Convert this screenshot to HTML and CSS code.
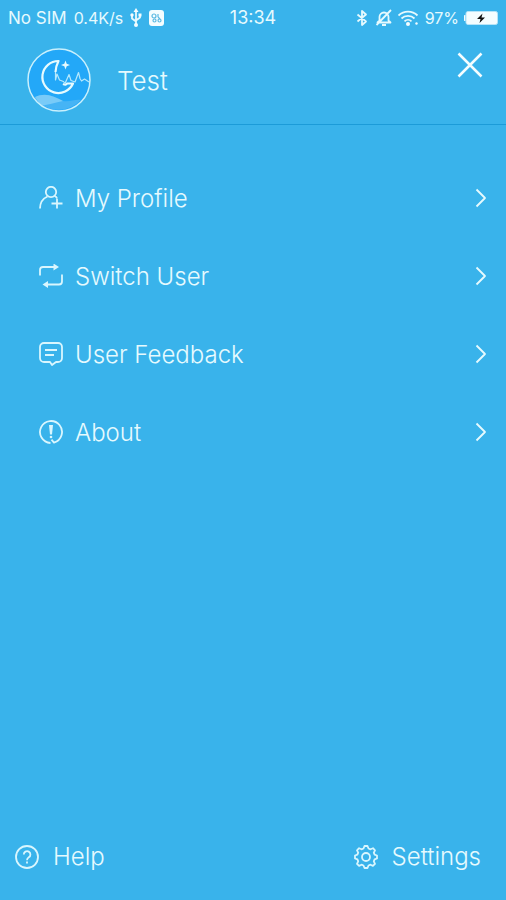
FILE: index.html
```html
<!DOCTYPE html>
<html lang="en">
    <head>
        <meta charset="UTF-8" />
        <meta name="viewport" content="width=device-width, initial-scale=1" />
        <title>Menu</title>
        <link rel="stylesheet" href="styles.css">
    </head>

    <body>
        <div class="status-bar">
            <div class="status-left">
                <span>No SIM</span>
                <span class="speed">0.4K/s</span>
                <svg width="12" height="20" viewBox="0 0 12 20">
                    <path class="line" d="M6 3v14M2 7v3.500l4 3M10 7v2.500l-4 3" />
                    <path class="solid" d="M6 0l2.500 4h-5zM8.500 5.500h3v3h-3z" />
                    <circle class="solid" cx="2" cy="7" r="1.700" />
                    <circle class="solid" cx="6" cy="17" r="2" />
                </svg>
                <svg class="app-icon" width="15" height="16" viewBox="0 0 15 16">
                    <rect class="solid" width="15" height="16" rx="3" />
                    <g class="app-mark">
                        <circle cx="5" cy="6" r="2" />
                        <circle cx="5.500" cy="10.500" r="1.500" />
                        <circle cx="10.500" cy="10.500" r="1.500" />
                        <path d="M9 4v3M9 7l2 2" />
                    </g>
                </svg>
            </div>
            <span class="clock">13:34</span>
            <div class="status-right">
                <svg width="12" height="18" viewBox="0 0 12 18">
                    <path class="line" d="M1.500 5.500l8.500 7-4 3.500V2l4 3.500-8.500 7" />
                </svg>
                <svg class="bell" width="18" height="18" viewBox="0 0 18 18">
                    <path class="line" d="M2.500 13.500l2-2V8a4.500 4.500 0 0 1 9 0v3.500l2 2zM7 16h4M16 1L1.500 16" />
                </svg>
                <svg class="wifi" width="22" height="18" viewBox="0 0 22 18">
                    <path class="line" d="M.5 6.500a13.500 13.500 0 0 1 19 0M3.500 9.500a9.200 9.200 0 0 1 13 0M6.500 12.300a5 5 0 0 1 7 0" />
                    <circle class="solid" cx="10" cy="15" r="2" />
                    <circle class="solid" cx="18.500" cy="14.500" r="1.200" />
                </svg>
                <span class="percent">97%</span>
                <svg width="34" height="14" viewBox="2 0 34 14">
                    <path class="solid" d="M3.500 4v6A3 3 0 0 1 3.500 4z" />
                    <rect class="battery" x="4" y=".5" width="31.500" height="13" rx="2" />
                    <path class="bolt" d="M20.500 2.500L15 8h3.500l-1 4 5.500-5.500h-3.500z" />
                </svg>
            </div>
        </div>

        <header class="header">
            <svg class="avatar" width="64" height="64" viewBox="0 0 64 64">
                <circle class="avatar-sky" cx="32" cy="32" r="31" />
                <path class="avatar-cloud" d="M7 50C15 44 28 48 36 53c7 1 12-2 18-1A31 31 0 0 1 9 52z" />
                <path class="avatar-haze" d="M8 49c10-5 19-1 28 4-9 2-17 4-22 5z" />
                <circle class="avatar-ring" cx="32" cy="32" r="31" />
                <path class="avatar-moon" d="M28.500 24C28.500 20 29.500 17 31.500 13A16 16 0 1 0 46 35.500h-6c-.5 1.500-2 1.500-4 .5" />
                <path class="avatar-wave" d="M28.500 24v8l1.500-6 2.500 6 4 1.500 1.500 2 4-9 2 6 4 1.500 3.500-9.500 1.500 6 1.500 2.500 3-2 4.500 3" />
                <path class="avatar-star" d="M38.500 12.500l1.200 3.300 3.300 1.200-3.300 1.200-1.200 3.300-1.200-3.300L34 17l3.300-1.200z" />
            </svg>
            <h1 class="user-name">Test</h1>
            <button type="button" class="close" aria-label="Close">
                <svg width="28" height="28" viewBox="0 0 28 28">
                    <path d="M2.500 2.500l23 23M25.500 2.500l-23 23" />
                </svg>
            </button>
        </header>

        <nav class="menu">
            <a class="menu-item" href="#profile">
                <svg class="icon" width="24" height="24" viewBox="0 0 24 24">
                    <circle cx="12" cy="6" r="5.200" />
                    <path d="M8.500 10.500C4 12.500 1 16.500 1 22.500M15.500 10c1.200.5 2 1 2.500 2M12.500 17.500H23.500M18 12.500v10" />
                </svg>
                <span>My Profile</span>
                <svg class="arrow" width="12" height="20" viewBox="0 0 12 20">
                    <path d="M1.500 1.500L10 10l-8.500 8.500" />
                </svg>
            </a>
            <a class="menu-item" href="#switch">
                <svg class="icon" width="24" height="24" viewBox="0 0 24 24">
                    <path d="M1 11.500V6a3 3 0 0 1 3-3h12M23 10.500v7a3 3 0 0 1-3 3H7" />
                    <path class="tip" d="M14.500 -.5l5.500 3.500-5.500 3.500zM9 17l-5.500 3.500L9 24z" />
                </svg>
                <span>Switch User</span>
                <svg class="arrow" width="12" height="20" viewBox="0 0 12 20">
                    <path d="M1.500 1.500L10 10l-8.500 8.500" />
                </svg>
            </a>
            <a class="menu-item" href="#feedback">
                <svg class="icon" width="24" height="24" viewBox="0 0 24 24">
                    <path d="M5 1h14a4 4 0 0 1 4 4v11a4 4 0 0 1-4 4h-2l-4 3-2-3H5a4 4 0 0 1-4-4V5a4 4 0 0 1 4-4zM6 8h12M6 13h9" />
                </svg>
                <span>User Feedback</span>
                <svg class="arrow" width="12" height="20" viewBox="0 0 12 20">
                    <path d="M1.500 1.500L10 10l-8.500 8.500" />
                </svg>
            </a>
            <a class="menu-item" href="#about">
                <svg class="icon" width="24" height="24" viewBox="0 0 24 24">
                    <path d="M11.500 23A11 11 0 1 1 15 22.600l-2.500-3" />
                    <path class="tip" d="M10 5h4l-1 9.500h-2z" />
                    <circle class="tip" cx="12" cy="17" r="1.300" />
                </svg>
                <span>About</span>
                <svg class="arrow" width="12" height="20" viewBox="0 0 12 20">
                    <path d="M1.500 1.500L10 10l-8.500 8.500" />
                </svg>
            </a>
        </nav>

        <footer class="footer">
            <a class="footer-link" href="#help">
                <svg class="icon" width="24" height="24" viewBox="0 0 24 24">
                    <circle cx="12" cy="12" r="11" />
                    <path d="M8.800 9.500a3.300 3.300 0 1 1 5 2.800c-1.300.8-1.800 1.400-1.800 3M12 16.500v2" />
                </svg>
                <span>Help</span>
            </a>
            <a class="footer-link" href="#settings">
                <svg class="icon" width="24" height="24" viewBox="0 0 24 24">
                    <path d="M9.500 3.500L10.500 1h3l1 2.500 2 .8L19 3.200 21 5.300l-1.200 2.400.8 2L23 10.500v3l-2.400.9-.8 2 1.200 2.400-2.100 2.100-2.400-1.200-2 .8-1 2.500h-3l-1-2.500-2-.8-2.400 1.200L3 18.800l1.200-2.400-.8-2L1 13.500v-3l2.400-.8.8-2L3 5.300l2.100-2.100 2.400 1.100z" />
                    <circle cx="12" cy="12" r="4" />
                </svg>
                <span>Settings</span>
            </a>
        </footer>
    </body>
</html>
```
FILE: styles.css
```css
* {
    box-sizing: border-box;
}

body {
    display: flex;
    flex-direction: column;
    min-height: 100vh;
    margin: 0;
    background-color: #39b3eb;
    color: #e6fafe;
    font-family: Inter, "Liberation Sans", sans-serif;
    font-weight: 300;
    font-size: 24px;
    line-height: 32px;
}

svg {
    display: block;
    flex: none;
    fill: none;
    stroke-linejoin: round;
}

a {
    color: inherit;
    text-decoration: none;
}

/* status bar */
.status-bar {
    display: grid;
    grid-template-columns: 1fr auto 1fr;
    align-items: center;
    height: 36px;
    padding: 0 8px;
    font-size: 17px;
    font-weight: 400;
    line-height: 20px;
    white-space: nowrap;
}

.status-left,
.status-right {
    display: flex;
    align-items: center;
}

.status-left {
    gap: 7px;
}

.status-right {
    justify-content: flex-end;
    gap: 5px;
}

.speed,
.percent {
    font-size: 16px;
}

.clock {
    font-size: 18px;
}

.bell {
    margin-left: 2px;
}

.line {
    stroke: #e6fafe;
    stroke-width: 1.8;
}

.solid,
.battery {
    fill: #f4fdff;
}

.battery {
    stroke: #b5e4f8;
}

.bolt {
    fill: #111;
}

.app-mark {
    stroke: #5bb9e2;
    stroke-width: 1.2;
}

/* header */
.header {
    display: flex;
    align-items: center;
    height: 89px;
    padding: 0 22px 0 27px;
    border-bottom: 1px solid #1c9bd8;
}

.user-name {
    margin: 0 auto 0 26px;
    padding-top: 2px;
    font-size: 26px;
    font-weight: 300;
}

.close {
    align-self: flex-start;
    margin-top: 15px;
    padding: 0;
    border: none;
    background: none;
    cursor: pointer;
}

.close path {
    stroke: #f4fdff;
    stroke-width: 2.5;
}

.avatar-sky {
    fill: #23a8f8;
}

.avatar-cloud {
    fill: #46b4f5;
}

.avatar-haze {
    fill: #79cbf8;
}

.avatar-ring {
    stroke: #c9f0fd;
    stroke-width: 1.5;
}

.avatar-moon {
    stroke: #e6fafe;
    stroke-width: 2.2;
}

.avatar-wave {
    stroke: #b5e8fd;
    stroke-width: 1.2;
}

.avatar-star {
    fill: #e6fafe;
}

/* menu */
.menu {
    flex: 1;
    padding-top: 34px;
}

.menu-item {
    display: flex;
    align-items: center;
    gap: 12px;
    height: 78px;
    padding: 0 19px 0 39px;
}

.menu-item span {
    padding-top: 2px;
}

.arrow {
    margin-left: auto;
    stroke: #e6fafe;
    stroke-width: 1.8;
}

.icon {
    stroke: #d9f6fe;
    stroke-width: 1.8;
}

.tip {
    fill: #d9f6fe;
    stroke: none;
}

/* footer */
.footer {
    display: flex;
    justify-content: space-between;
    padding: 0 25px 27px 15px;
}

.footer-link {
    display: flex;
    align-items: center;
    gap: 14px;
}
```
